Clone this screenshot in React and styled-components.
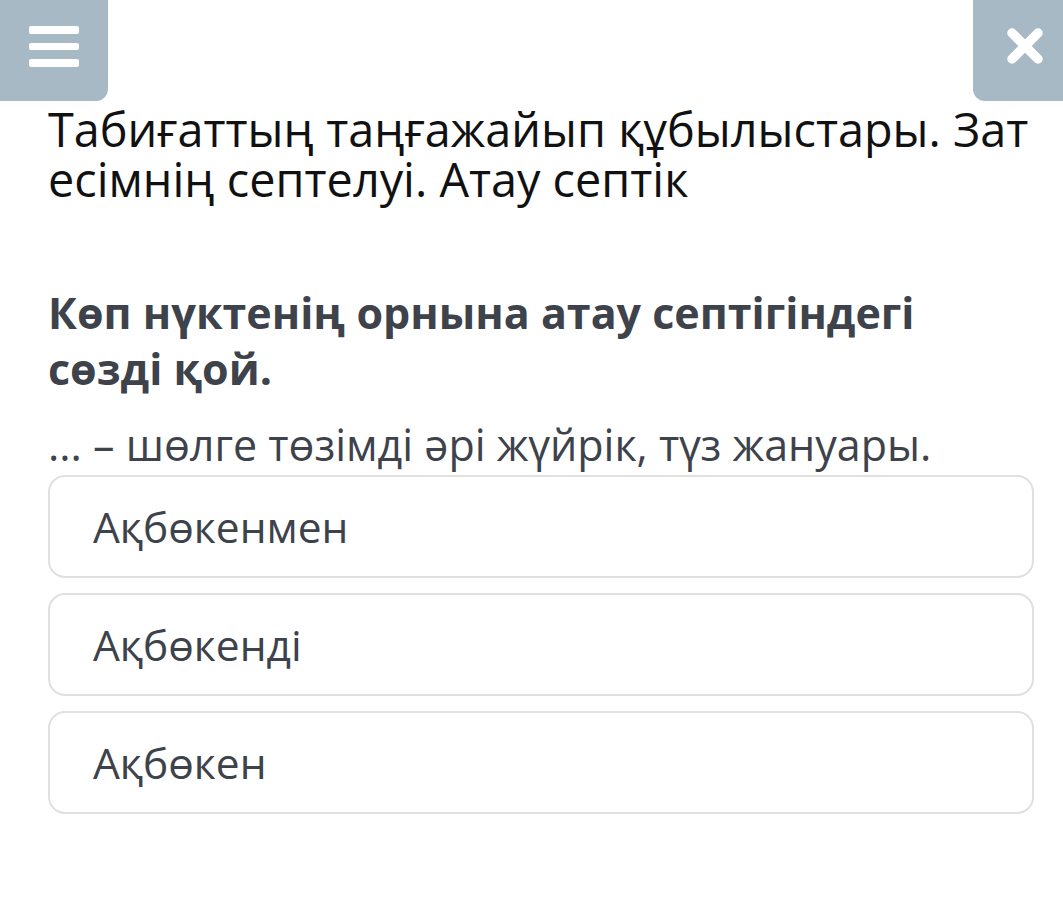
import styled, { createGlobalStyle } from 'styled-components'

const GlobalStyle = createGlobalStyle`
  html, body {
    margin: 0;
    padding: 0;
    background: #ffffff;
    overflow-x: hidden;
  }
  body {
    font-family: "Open Sans", "Noto Sans", sans-serif;
  }
`

const Page = styled.div`
  width: 1063px;
  min-height: 899px;
  display: flex;
  flex-direction: column;
  overflow: hidden;
`

const TopBar = styled.div`
  display: flex;
  justify-content: space-between;
  height: 101px;
`

const CornerButton = styled.button`
  width: ${props => props.$width}px;
  height: 101px;
  margin-right: ${props => (props.$side === 'right' ? '-14px' : '0')};
  border: none;
  padding: 0 0 9px;
  background: #a6b9c5;
  border-radius: ${props => (props.$side === 'left' ? '0 0 12px 0' : '0 0 0 12px')};
  display: flex;
  align-items: center;
  justify-content: center;
  cursor: pointer;
`

const Content = styled.main`
  padding: 0 29px 0 48px;
  margin-top: 3px;
`

const Title = styled.h1`
  margin: 0;
  font-size: 46.8px;
  font-weight: 400;
  line-height: 50px;
  color: #111111;
`

const Question = styled.h2`
  margin: 81px 0 0;
  font-size: 43px;
  font-weight: 700;
  line-height: 56px;
  color: #3d424b;
  max-width: 900px;
`

const Sentence = styled.p`
  margin: 23px 0 0;
  font-size: 43px;
  line-height: 50px;
  color: #3d424b;
`

const Options = styled.div`
  display: flex;
  flex-direction: column;
  gap: 15px;
  margin-top: 5px;
`

const Option = styled.div`
  height: 99px;
  border: 2px solid #e0e0e0;
  border-radius: 17px;
  display: flex;
  align-items: center;
  padding-left: 43px;
  font-size: 42.5px;
  color: #3d424b;
`

const MenuIcon = () => (
  <svg width="50" height="41" viewBox="0 0 50 41">
    <rect x="0" y="0" width="50" height="8" rx="2" fill="#fff" />
    <rect x="0" y="17" width="50" height="7" rx="2" fill="#fff" />
    <rect x="0" y="33" width="50" height="8" rx="2" fill="#fff" />
  </svg>
)

const CloseIcon = () => (
  <svg width="40" height="40" viewBox="0 0 40 40">
    <path d="M7 7 L33 33 M33 7 L7 33" stroke="#fff" strokeWidth="9.5" strokeLinecap="round" />
  </svg>
)

const options = ['Ақбөкенмен', 'Ақбөкенді', 'Ақбөкен']

const App = () => (
  <Page>
    <GlobalStyle />
    <TopBar>
      <CornerButton $side="left" $width={108} aria-label="Мәзір">
        <MenuIcon />
      </CornerButton>
      <CornerButton $side="right" $width={104} aria-label="Жабу">
        <CloseIcon />
      </CornerButton>
    </TopBar>
    <Content>
      <Title>Табиғаттың таңғажайып құбылыстары. Зат есімнің септелуі. Атау септік</Title>
      <Question>Көп нүктенің орнына атау септігіндегі сөзді қой.</Question>
      <Sentence>... – шөлге төзімді әрі жүйрік, түз жануары.</Sentence>
      <Options>
        {options.map(o => (
          <Option key={o}>{o}</Option>
        ))}
      </Options>
    </Content>
  </Page>
)

export default App
